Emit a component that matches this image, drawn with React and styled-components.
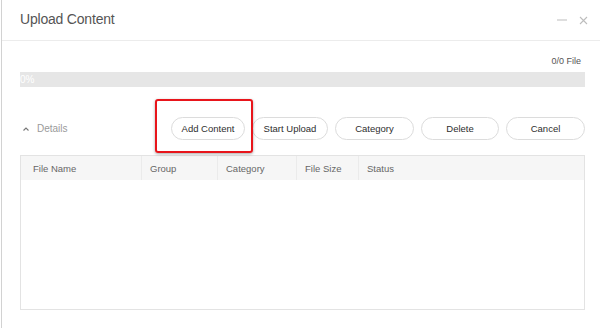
import React from "react";
import styled, { createGlobalStyle } from "styled-components";

const Global = createGlobalStyle`
  html, body { margin: 0; padding: 0; background: #fff; }
  body { font-family: "Liberation Sans", Arial, sans-serif; }
`;

const Frame = styled.div`
  width: 600px;
  height: 328px;
  box-sizing: border-box;
  padding-left: 1px;
  background: #fff;
  overflow: hidden;
`;

const Window = styled.div`
  height: 100%;
  border-left: 1px solid #d2d2d2;
  display: flex;
  flex-direction: column;
`;

const Header = styled.div`
  height: 40px;
  flex: none;
  display: flex;
  align-items: center;
  padding: 0 12px 0 18px;
  border-bottom: 1px solid #ececec;
`;

const Title = styled.div`
  font-size: 14px;
  color: #555;
  letter-spacing: -0.2px;
  padding-bottom: 2px;
`;

const Controls = styled.div`
  margin-left: auto;
  display: flex;
  align-items: center;
  gap: 12px;
  color: #bdbdbd;
`;

const Body = styled.div`
  flex: 1;
  display: flex;
  flex-direction: column;
  padding: 0 15px 0 18px;
`;

const Count = styled.div`
  margin-top: 14px;
  height: 12px;
  line-height: 12px;
  text-align: right;
  padding-right: 4px;
  font-size: 9px;
  color: #555;
`;

const Progress = styled.div`
  margin-top: 5px;
  height: 15px;
  line-height: 15px;
  background: #e6e6e6;
  font-size: 10px;
  color: #fff;
`;

const Toolbar = styled.div`
  margin-top: 30px;
  height: 23px;
  display: flex;
  align-items: center;
`;

const Toggle = styled.div`
  display: flex;
  align-items: center;
  gap: 8px;
  padding-left: 3px;
  font-size: 10px;
  color: #9a9a9a;
`;

const Buttons = styled.div`
  margin-left: auto;
  display: flex;
  gap: 7px;
`;

const Slot = styled.div`
  position: relative;
`;

const Highlight = styled.div`
  position: absolute;
  left: -16px;
  top: -18px;
  width: 98px;
  height: 54px;
  box-sizing: border-box;
  border: 2.5px solid #e8151b;
  border-radius: 3px;
  box-shadow: 0 1px 3px rgba(0, 0, 0, 0.35);
  pointer-events: none;
`;

const Button = styled.button`
  width: ${(p) => p.$w}px;
  height: 23px;
  box-sizing: border-box;
  border: 1px solid #dcdcdc;
  border-radius: 12px;
  background: #fff;
  font-family: "Liberation Sans", Arial, sans-serif;
  font-size: 9.5px;
  color: #2e2e2e;
  padding: 0;
  cursor: pointer;
`;

const Table = styled.div`
  margin-top: 15px;
  height: 155px;
  box-sizing: border-box;
  border: 1px solid #e3e3e3;
  display: flex;
  flex-direction: column;
`;

const HeadRow = styled.div`
  height: 24px;
  display: grid;
  grid-template-columns: 120px 76px 79px 62px 1fr;
  background: #f6f6f6;
`;

const HeadCell = styled.div`
  display: flex;
  align-items: center;
  padding-left: ${(p) => (p.$first ? 12 : 8)}px;
  border-left: ${(p) => (p.$first ? "none" : "1px solid #ebebeb")};
  font-size: 9.5px;
  color: #666;
`;

const columns = ["File Name", "Group", "Category", "File Size", "Status"];

export default function App() {
  return (
    <Frame>
      <Global />
      <Window>
        <Header>
          <Title>Upload Content</Title>
          <Controls>
            <svg width="10" height="10" viewBox="0 0 10 10">
              <line x1="0" y1="5" x2="10" y2="5" stroke="currentColor" strokeWidth="1" />
            </svg>
            <svg width="9" height="9" viewBox="0 0 9 9">
              <path d="M1 1 L8 8 M8 1 L1 8" stroke="currentColor" strokeWidth="1.1" />
            </svg>
          </Controls>
        </Header>
        <Body>
          <Count>0/0 File</Count>
          <Progress>0%</Progress>
          <Toolbar>
            <Toggle>
              <svg width="6" height="4" viewBox="0 0 6 4">
                <path d="M0.5 3.5 L3 1 L5.5 3.5" fill="none" stroke="#777" strokeWidth="1.1" />
              </svg>
              Details
            </Toggle>
            <Buttons>
              <Slot>
                <Button $w={74}>Add Content</Button>
                <Highlight />
              </Slot>
              <Button $w={76}>Start Upload</Button>
              <Button $w={79}>Category</Button>
              <Button $w={78}>Delete</Button>
              <Button $w={79}>Cancel</Button>
            </Buttons>
          </Toolbar>
          <Table>
            <HeadRow>
              {columns.map((c, i) => (
                <HeadCell key={c} $first={i === 0}>
                  {c}
                </HeadCell>
              ))}
            </HeadRow>
          </Table>
        </Body>
      </Window>
    </Frame>
  );
}
